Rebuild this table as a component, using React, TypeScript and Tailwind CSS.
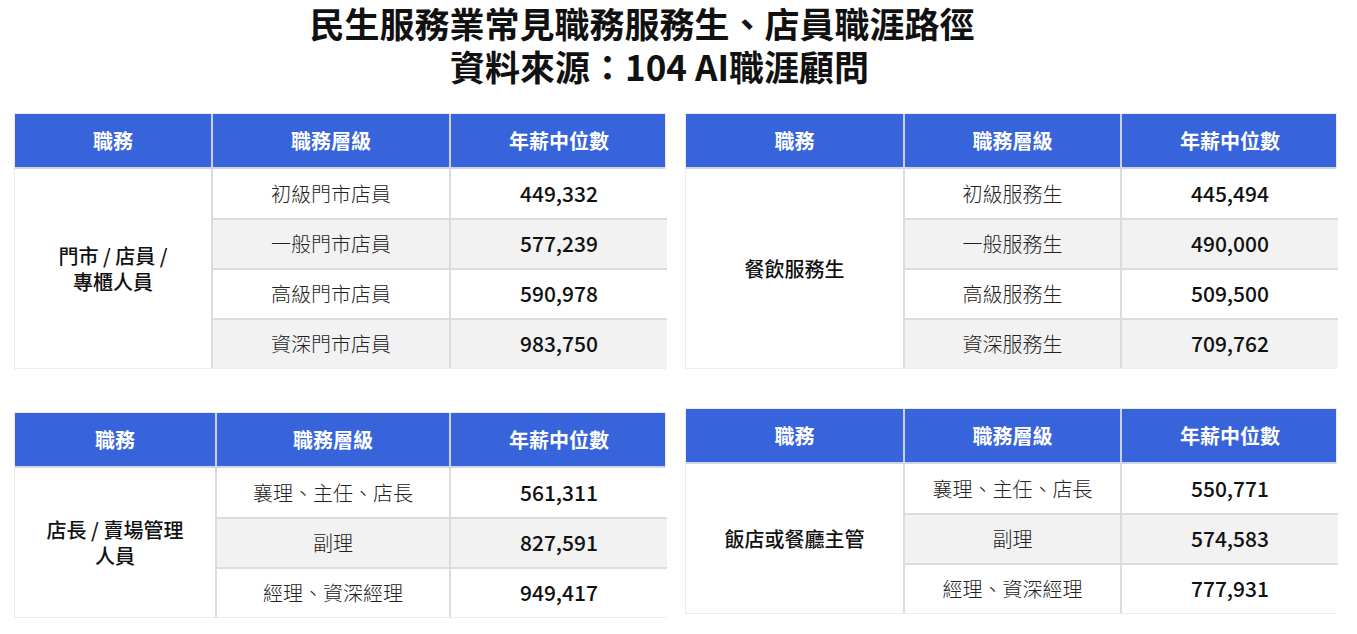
import React from "react";

type Table = {
  cols: string;
  category: string[];
  rows: [string, string][];
};

const font = { fontFamily: '"Noto Sans CJK TC", "Noto Sans", sans-serif' };

const tables: Record<string, Table> = {
  store: {
    cols: "grid-cols-[196px_238px_218px]",
    category: ["門市 / 店員 /", "專櫃人員"],
    rows: [
      ["初級門市店員", "449,332"],
      ["一般門市店員", "577,239"],
      ["高級門市店員", "590,978"],
      ["資深門市店員", "983,750"],
    ],
  },
  waiter: {
    cols: "grid-cols-[217px_217px_218px]",
    category: ["餐飲服務生"],
    rows: [
      ["初級服務生", "445,494"],
      ["一般服務生", "490,000"],
      ["高級服務生", "509,500"],
      ["資深服務生", "709,762"],
    ],
  },
  manager: {
    cols: "grid-cols-[200px_234px_218px]",
    category: ["店長 / 賣場管理", "人員"],
    rows: [
      ["襄理、主任、店長", "561,311"],
      ["副理", "827,591"],
      ["經理、資深經理", "949,417"],
    ],
  },
  restaurant: {
    cols: "grid-cols-[217px_217px_218px]",
    category: ["飯店或餐廳主管"],
    rows: [
      ["襄理、主任、店長", "550,771"],
      ["副理", "574,583"],
      ["經理、資深經理", "777,931"],
    ],
  },
};

function SalaryTable({ table }: { table: Table }) {
  return (
    <div className="w-[652px] border border-[#ececec]">
      {/* header */}
      <div className={`grid ${table.cols} h-[55px] bg-[#3763db] text-white text-[20px] font-bold border-b-2 border-[#cfd6e6]`}>
        <div className="flex items-center justify-center">職務</div>
        <div className="flex items-center justify-center border-l-2 border-[#c9d2ea]">職務層級</div>
        <div className="flex items-center justify-center border-l-2 border-[#c9d2ea]">年薪中位數</div>
      </div>
      {/* body */}
      <div className={`grid ${table.cols}`}>
        <div
          className="flex flex-col items-center justify-center text-[20px] font-medium leading-[26px] text-[#111]"
          style={{ gridRow: `span ${table.rows.length}` }}
        >
          {table.category.map((l) => (
            <div key={l}>{l}</div>
          ))}
        </div>
        {table.rows.map(([level, pay], i) => (
          <React.Fragment key={level}>
            <div
              className={`flex items-center justify-center text-[20px] font-light text-[#222] border-l-2 border-[#dcdcdc] ${
                i > 0 ? "border-t-2 h-[50px]" : "h-[49px]"
              } ${i % 2 === 1 ? "bg-[#f2f2f2]" : "bg-white"}`}
            >
              {level}
            </div>
            <div
              className={`flex items-center justify-center text-[21px] font-medium text-[#111] border-l-2 border-[#dcdcdc] ${
                i > 0 ? "border-t-2 h-[50px]" : "h-[49px]"
              } ${i % 2 === 1 ? "bg-[#f2f2f2]" : "bg-white"}`}
            >
              {pay}
            </div>
          </React.Fragment>
        ))}
      </div>
    </div>
  );
}

export default function App() {
  return (
    <div className="w-[1357px] h-[634px] bg-white overflow-hidden" style={font}>
      <div className="pt-[1px] text-[35px] font-bold leading-[43px] text-[#111] text-center">
        <div className="pr-[73px]">民生服務業常見職務服務生、店員職涯路徑</div>
        <div className="pr-[38px]">資料來源：104 AI職涯顧問</div>
      </div>
      <div className="flex gap-[19px] pl-[14px] pt-[26px]">
        <div className="flex flex-col gap-[43px]">
          <SalaryTable table={tables.store} />
          <SalaryTable table={tables.manager} />
        </div>
        <div className="flex flex-col gap-[39px]">
          <SalaryTable table={tables.waiter} />
          <SalaryTable table={tables.restaurant} />
        </div>
      </div>
    </div>
  );
}
